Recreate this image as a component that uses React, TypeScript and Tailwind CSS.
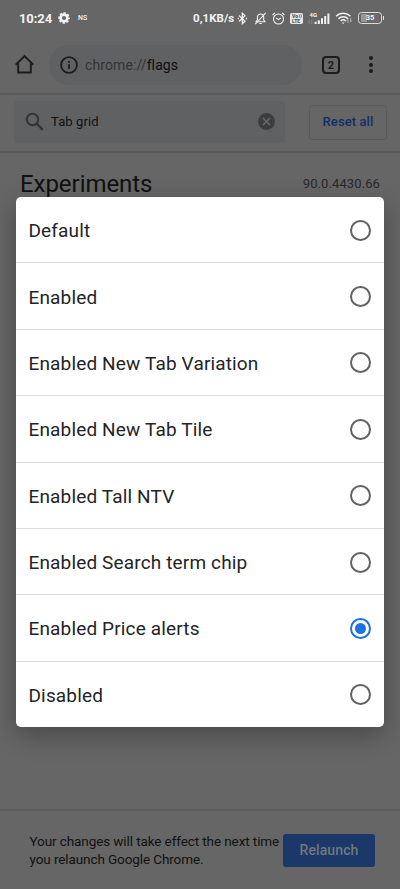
import React, { useState } from 'react';
import clsx from 'clsx';

const OPTIONS = [
  'Default',
  'Enabled',
  'Enabled New Tab Variation',
  'Enabled New Tab Tile',
  'Enabled Tall NTV',
  'Enabled Search term chip',
  'Enabled Price alerts',
  'Disabled',
];

function StatusBar() {
  return (
    <div className="flex h-9 shrink-0 items-center pt-px pl-[19px] pr-[16px] text-[#f2f2f2]">
      <span className="w-[39px] text-[13px] font-bold leading-none tracking-[-0.1px]">10:24</span>
      {/* Settings gear */}
      <svg className="-mt-px h-3 w-3" viewBox="0 0 12 12">
        <circle cx="6" cy="6" r="3.4" fill="none" stroke="currentColor" strokeWidth="2.6" />
        <circle cx="6" cy="6" r="5" fill="none" stroke="currentColor" strokeWidth="1.6" strokeDasharray="2.4 1.527" strokeDashoffset="1.2" />
      </svg>
      <span className="ml-[8px] text-[7px] font-medium leading-none">NS</span>

      <span className="ml-auto w-[44px] whitespace-nowrap text-[11.5px] font-bold leading-none tracking-[0.05px]">0,1KB/s</span>
      {/* Bluetooth */}
      <svg className="-mt-px h-[13px] w-[11px]" viewBox="0 0 11 13" fill="none" stroke="currentColor" strokeWidth="1.2">
        <path d="M2 3.5 8 9.2 5.3 11.8V1.2L8 3.8 2 9.5" />
        <path d="M.6 6.5h1.4M8.8 6.5h1.4" strokeWidth="1.3" />
      </svg>
      {/* Muted bell */}
      <svg className="-mt-px ml-[6px] h-[13px] w-[13px]" viewBox="0 0 13 13" fill="none" stroke="currentColor" strokeWidth="1.1">
        <path d="M2 9.7h9L9.7 8V5.2C9.7 3.3 8.4 2 6.6 2S3.4 3.3 3.4 5.2V8L2 9.7Z" />
        <path d="M5.3 11.5h2.5M1.3 12.1 11.7.8" />
      </svg>
      {/* Alarm */}
      <svg className="-mt-px ml-[5px] h-[13px] w-[13px]" viewBox="0 0 13 13" fill="none" stroke="currentColor" strokeWidth="1.1">
        <circle cx="6.5" cy="7" r="5" />
        <path d="M4.2 6l2.3 1.6L8.8 6M.6 3 2.9.9M12.4 3 10.1.9" />
      </svg>
      <svg className="-mt-px ml-[5px] h-[11px] w-[13px]" viewBox="0 0 13 11">
        <rect width="13" height="11" rx="1.8" fill="#e8e8e8" />
        <text x="2" y="5" fontSize="5" fontWeight="900" fill="#555">Vo</text>
        <path d="M9.2 1.5q1 1.6 0 3.3M10.8 1q1.2 2.1 0 4.2" fill="none" stroke="#555" strokeWidth=".7" />
        <text x="2" y="9.8" fontSize="5" fontWeight="900" fill="#555">LTE</text>
      </svg>
      {/* Mobile signal */}
      <svg className="-mt-px ml-[5px] h-[13px] w-[22px]" viewBox="0 0 22 13" fill="currentColor">
        <text x="1.5" y="5.2" fontSize="6" fontWeight="700">4G</text>
        <path d="M6.6 9.8h2V12h-2zM9.8 8.2h2V12h-2zM13 6.2h2V12h-2zM16.2 4h2v8h-2zM19.4 1.6h2V12h-2z" />
        <path d="M1.2 8v4M3.8 8v4" stroke="#929292" strokeWidth=".8" />
      </svg>
      {/* Wifi */}
      <svg className="-mt-px ml-[5px] h-[12px] w-[18px]" viewBox="0 0 18 12" fill="none" stroke="currentColor" strokeWidth="1.5">
        <path d="M1 4.2C5 .4 11.3.4 15.5 4.2M3.4 6.8c2.7-2.6 7.1-2.6 9.7 0M5.7 9c1.5-1.4 3.7-1.4 5.1 0" />
        <path d="M6.8 10.4 8.2 12l1.5-1.6Z" fill="currentColor" stroke="none" />
        <path d="M13 11V7.5l-1.2 1.4M15.6 6v4l1.3-1.5" stroke="#bbb" strokeWidth=".9" />
      </svg>
      <span className="ml-[5px] -mt-px flex h-[12px] w-[24px] items-center justify-center rounded-[3.5px] border-[1.5px] border-[#ddd] text-[7.5px] font-bold leading-none">
        <span className="flex h-[8px] w-[18px] items-center justify-center rounded-[1px] bg-linear-to-r from-[#989898] from-35% to-[#6c6c6c] to-35%">35</span>
      </span>
      <span className="-mt-px ml-px h-[4px] w-px bg-[#ddd]" />
    </div>
  );
}

function AddressBar() {
  return (
    <div className="flex h-[57px] shrink-0 items-center pl-[14px] pr-[22px] text-[#1c1c1d]">
      <svg className="h-[21px] w-[21px]" viewBox="0 0 21 21" fill="none" stroke="currentColor" strokeWidth="1.9">
        <path d="M1.7 10.7 10.5 2l8.8 8.7M4.2 9.5v9h12.6v-9" />
      </svg>
      <div className="ml-[14px] flex h-10 w-[253px] items-center rounded-full bg-[#5f6163] pl-[11px]">
        <svg className="h-[18px] w-[18px]" viewBox="0 0 18 18" fill="none" stroke="currentColor" strokeWidth="1.8">
          <circle cx="9" cy="9" r="7.9" />
          <path d="M9 8.2v4.9M9 4.9v1.9" />
        </svg>
        <span className="ml-[7px] text-[14px] leading-5 tracking-[0.1px] text-[#333435]">
          chrome://<span className="text-[#0d0d0e]">flags</span>
        </span>
      </div>
      <div className="ml-[20px] flex h-[18px] w-[18px] items-center justify-center rounded-[4px] border-2 border-current pt-px text-[11px] font-bold leading-none">
        2
      </div>
      <div className="ml-auto mr-[5px] flex flex-col gap-[2.3px]">
        <i className="h-1 w-1 rounded-full bg-current" />
        <i className="h-1 w-1 rounded-full bg-current" />
        <i className="h-1 w-1 rounded-full bg-current" />
      </div>
    </div>
  );
}

function SearchBar() {
  return (
    <div className="flex h-[60px] shrink-0 items-center border-y-2 border-[#5b5b5b] pl-[14px] pr-[13px]">
      <div className="-mt-[3px] flex h-[42px] w-[271px] items-center rounded-[3px] bg-[#5f6163] pl-[11px] pr-[9px]">
        <svg className="h-[20px] w-[20px]" viewBox="0 0 20 20" fill="none" stroke="#323435" strokeWidth="2">
          <circle cx="7.5" cy="7.5" r="5.7" />
          <path d="m11.7 11.7 6.1 6.1" strokeWidth="2.4" />
        </svg>
        <span className="ml-[6px] text-[13px] leading-5 tracking-[0.1px] text-[#111]">Tab grid</span>
        <svg className="ml-auto h-[19px] w-[19px]" viewBox="0 0 19 19">
          <circle cx="9.5" cy="9.5" r="8.5" fill="#3c3d3e" />
          <path d="m6 6 7 7M13 6l-7 7" stroke="#66686a" strokeWidth="1.7" />
        </svg>
      </div>
      <button className="-mt-[2px] ml-auto h-[35px] w-[78px] rounded-[3px] border border-[#5a5b5d] text-[13px] font-medium tracking-[0.1px] text-[#112f66]">
        Reset all
      </button>
    </div>
  );
}

interface OptionRowProps {
  label: string;
  checked: boolean;
  onSelect: () => void;
}

function OptionRow({ label, checked, onSelect }: OptionRowProps) {
  return (
    <button
      role="radio"
      aria-checked={checked}
      onClick={onSelect}
      className="flex flex-1 items-center justify-between border-b border-[#dcdcdc] pl-[12.5px] pr-[13px] text-left last:border-b-0"
    >
      <span className="mt-[3px] text-[19px] leading-6 tracking-[0.15px] text-[#242426]">{label}</span>
      <span
        className={clsx(
          'mt-px flex h-[21px] w-[21px] items-center justify-center rounded-full border-2',
          checked ? 'border-[#1b72e0]' : 'border-[#626266]'
        )}
      >
        {checked && <span className="h-[11px] w-[11px] rounded-full bg-[#1b72e0]" />}
      </span>
    </button>
  );
}

export default function App() {
  const [selected, setSelected] = useState('Enabled Price alerts');

  return (
    <div className="relative flex h-[889px] w-[400px] flex-col overflow-hidden bg-[#666] font-['Roboto',sans-serif]">
      <StatusBar />
      <AddressBar />
      <SearchBar />

      <div className="flex flex-1 items-start justify-between pl-[20px] pr-[20px] pt-[15px]">
        <h1 className="text-[24px] leading-8 tracking-[-0.05px] text-[#111]">Experiments</h1>
        <span className="text-[13px] leading-8 tracking-[0.1px] text-[#272829]">90.0.4430.66</span>
      </div>

      <div className="flex h-20 shrink-0 items-center border-t-2 border-[#5d5d5d] pl-[29.5px] pr-[25px]">
        <p className="whitespace-nowrap text-[13.5px] leading-[18px] tracking-[-0.1px] text-[#111]">
          Your changes will take effect the next time
          <br />
          you relaunch Google Chrome.
        </p>
        <button className="ml-auto h-[33px] w-[92px] shrink-0 rounded-[3px] bg-[#1b3868] text-[14px] font-medium tracking-[0.1px] text-[#73777e]">
          Relaunch
        </button>
      </div>

      {/* Option picker */}
      <div
        role="radiogroup"
        className="absolute left-4 top-[197px] flex h-[530px] w-[368px] flex-col overflow-hidden rounded-[5px] bg-white shadow-[0_8px_26px_rgba(0,0,0,0.3)]"
      >
        {OPTIONS.map((label) => (
          <OptionRow key={label} label={label} checked={label === selected} onSelect={() => setSelected(label)} />
        ))}
      </div>
    </div>
  );
}
